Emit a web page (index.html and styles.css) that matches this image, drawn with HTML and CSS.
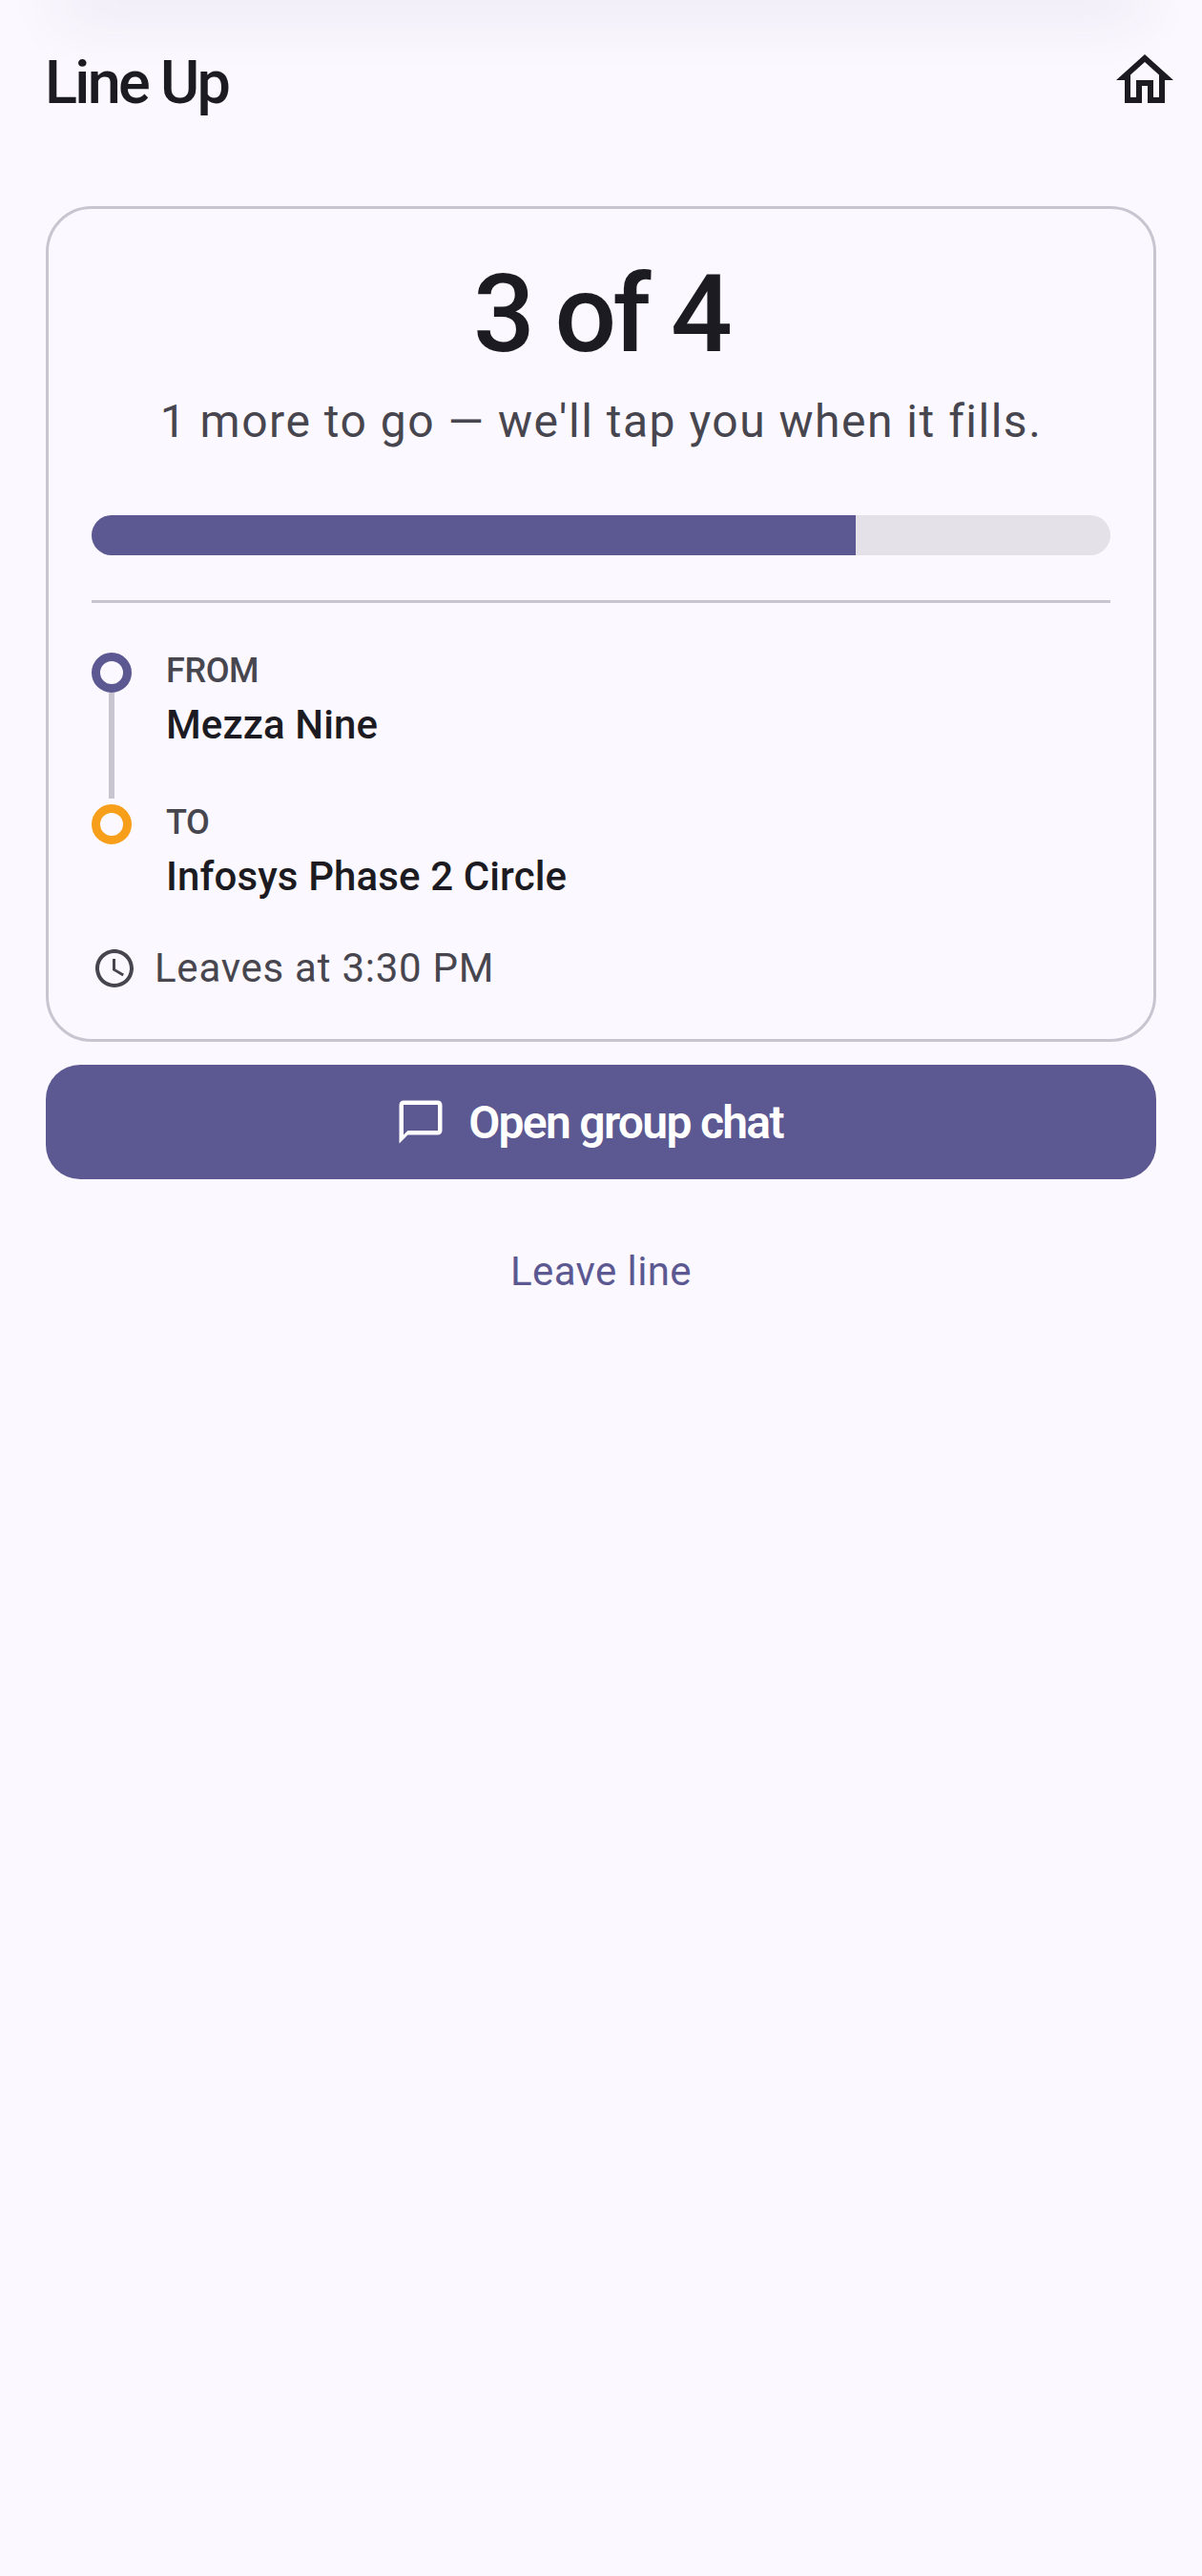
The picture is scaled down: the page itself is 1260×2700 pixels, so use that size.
FILE: index.html
```html
<!DOCTYPE html>
<html>
<head>
    <meta charset="UTF-8">
    <title>Line Up</title>
    <link rel="stylesheet" href="styles.css">
</head>
<body>
    <div class="top-shadow"></div>
    <header class="app-bar">
        <h1 class="app-title">Line Up</h1>
        <svg class="home-icon" viewBox="0 0 24 24"><path d="M12 5.69l5 4.5V18h-2v-6H9v6H7v-7.81l5-4.5M12 3L2 12h3v8h6v-6h2v6h6v-8h3L12 3z"/></svg>
    </header>
    <main class="content">
        <section class="card">
            <div class="count">3 of 4</div>
            <p class="count-note">1 more to go — we'll tap you when it fills.</p>
            <div class="progress"><div class="progress-fill"></div></div>
            <hr class="divider">
            <div class="stop stop-from">
                <div class="stop-marker">
                    <span class="dot dot-from"></span>
                    <span class="stop-line"></span>
                </div>
                <div class="stop-text">
                    <div class="stop-label">FROM</div>
                    <div class="stop-name">Mezza Nine</div>
                </div>
            </div>
            <div class="stop">
                <div class="stop-marker">
                    <span class="dot dot-to"></span>
                </div>
                <div class="stop-text">
                    <div class="stop-label">TO</div>
                    <div class="stop-name">Infosys Phase 2 Circle</div>
                </div>
            </div>
            <div class="leaves">
                <svg class="clock-icon" viewBox="0 0 24 24"><path d="M11.99 2C6.47 2 2 6.48 2 12s4.47 10 9.99 10C17.52 22 22 17.52 22 12S17.52 2 11.99 2zM12 20c-4.42 0-8-3.58-8-8s3.58-8 8-8 8 3.58 8 8-3.58 8-8 8zm.5-13H11v6l5.25 3.15.75-1.23-4.5-2.67z"/></svg>
                <span>Leaves at 3:30 PM</span>
            </div>
        </section>
        <button type="button" class="chat-button">
            <svg class="chat-icon" viewBox="0 0 24 24"><path d="M20 2H4c-1.1 0-2 .9-2 2v18l4-4h14c1.1 0 2-.9 2-2V4c0-1.1-.9-2-2-2zm0 14H6l-2 2V4h16v12z"/></svg>
            <span>Open group chat</span>
        </button>
        <div class="leave-link">Leave line</div>
    </main>
</body>
</html>
```

FILE: styles.css
```css
* {
    box-sizing: border-box;
}
body {
    margin: 0;
    min-height: 2700px;
    background-color: #FBF8FF;
    color: #1B1B21;
    font-family: Roboto, sans-serif;
    overflow: hidden;
}
/* Faint shadow bleeding in from above the screen */
.top-shadow {
    position: absolute;
    top: -30px;
    left: 60px;
    right: 60px;
    height: 30px;
    box-shadow: 0 16px 60px rgba(60, 50, 110, 0.1);
}
.app-bar {
    display: flex;
    align-items: center;
    justify-content: space-between;
    height: 72px;
    margin-top: 48px;
    padding: 0 24px 0 47px;
}
.app-title {
    margin: 6px 0 0;
    font-size: 63px;
    line-height: 72px;
    font-weight: 500;
    letter-spacing: -2.7px;
}
.home-icon {
    width: 72px;
    height: 72px;
    fill: #1B1B21;
}
.content {
    padding: 96px 48px 0;
}
.card {
    height: 876px;
    padding: 41px 45px 48px;
    border: 3px solid #C8C5D0;
    border-radius: 48px;
}
.count {
    font-size: 114px;
    line-height: 138px;
    font-weight: 500;
    letter-spacing: -3.9px;
    text-align: center;
}
.count-note {
    margin: 11px 0 0;
    font-size: 48px;
    line-height: 66px;
    letter-spacing: 1.5px;
    text-align: center;
    color: #47464F;
}
.progress {
    height: 42px;
    margin-top: 65px;
    border-radius: 21px;
    background-color: #E4E1E9;
    overflow: hidden;
}
.progress-fill {
    width: 75%;
    height: 100%;
    background-color: #5C5891;
}
.divider {
    height: 3px;
    margin: 47px 0 46px;
    border: none;
    background-color: #C8C5D0;
}
.stop {
    display: flex;
    gap: 36px;
}
.stop-from {
    padding-bottom: 50px;
}
.stop-marker {
    display: flex;
    flex-direction: column;
    align-items: center;
    width: 42px;
    padding-top: 6px;
}
.stop-from .stop-marker {
    margin-bottom: -50px;
}
.dot {
    width: 42px;
    height: 42px;
    border: 9px solid;
    border-radius: 50%;
}
.dot-from {
    border-color: #5C5891;
}
.dot-to {
    border-color: #F79F1A;
}
.stop-line {
    flex: 1;
    width: 6px;
    background-color: #C8C5D0;
}
.stop-label {
    margin-top: 1px;
    font-size: 36px;
    line-height: 48px;
    font-weight: 500;
    letter-spacing: -0.4px;
    color: #47464F;
}
.stop-name {
    margin-top: 6px;
    font-size: 42px;
    line-height: 54px;
    font-weight: 500;
    letter-spacing: 0.12px;
}
.leaves {
    display: flex;
    align-items: center;
    gap: 18px;
    margin-top: 42px;
    font-size: 42px;
    line-height: 54px;
    letter-spacing: 0.75px;
    color: #47464F;
}
.clock-icon {
    width: 48px;
    height: 48px;
    fill: #47464F;
}
.chat-button {
    display: flex;
    align-items: center;
    justify-content: center;
    gap: 23px;
    width: 100%;
    height: 120px;
    margin-top: 24px;
    padding: 0 25px 0 0;
    border: none;
    border-radius: 36px;
    background-color: #5C5891;
    color: #FFFFFF;
    font-family: Roboto, sans-serif;
    font-size: 48px;
    font-weight: 600;
    letter-spacing: -1.7px;
}
.chat-icon {
    width: 54px;
    height: 54px;
    fill: #FFFFFF;
}
.leave-link {
    margin-top: 70px;
    font-size: 42px;
    line-height: 54px;
    letter-spacing: 0.4px;
    text-align: center;
    color: #5C5891;
}
```
